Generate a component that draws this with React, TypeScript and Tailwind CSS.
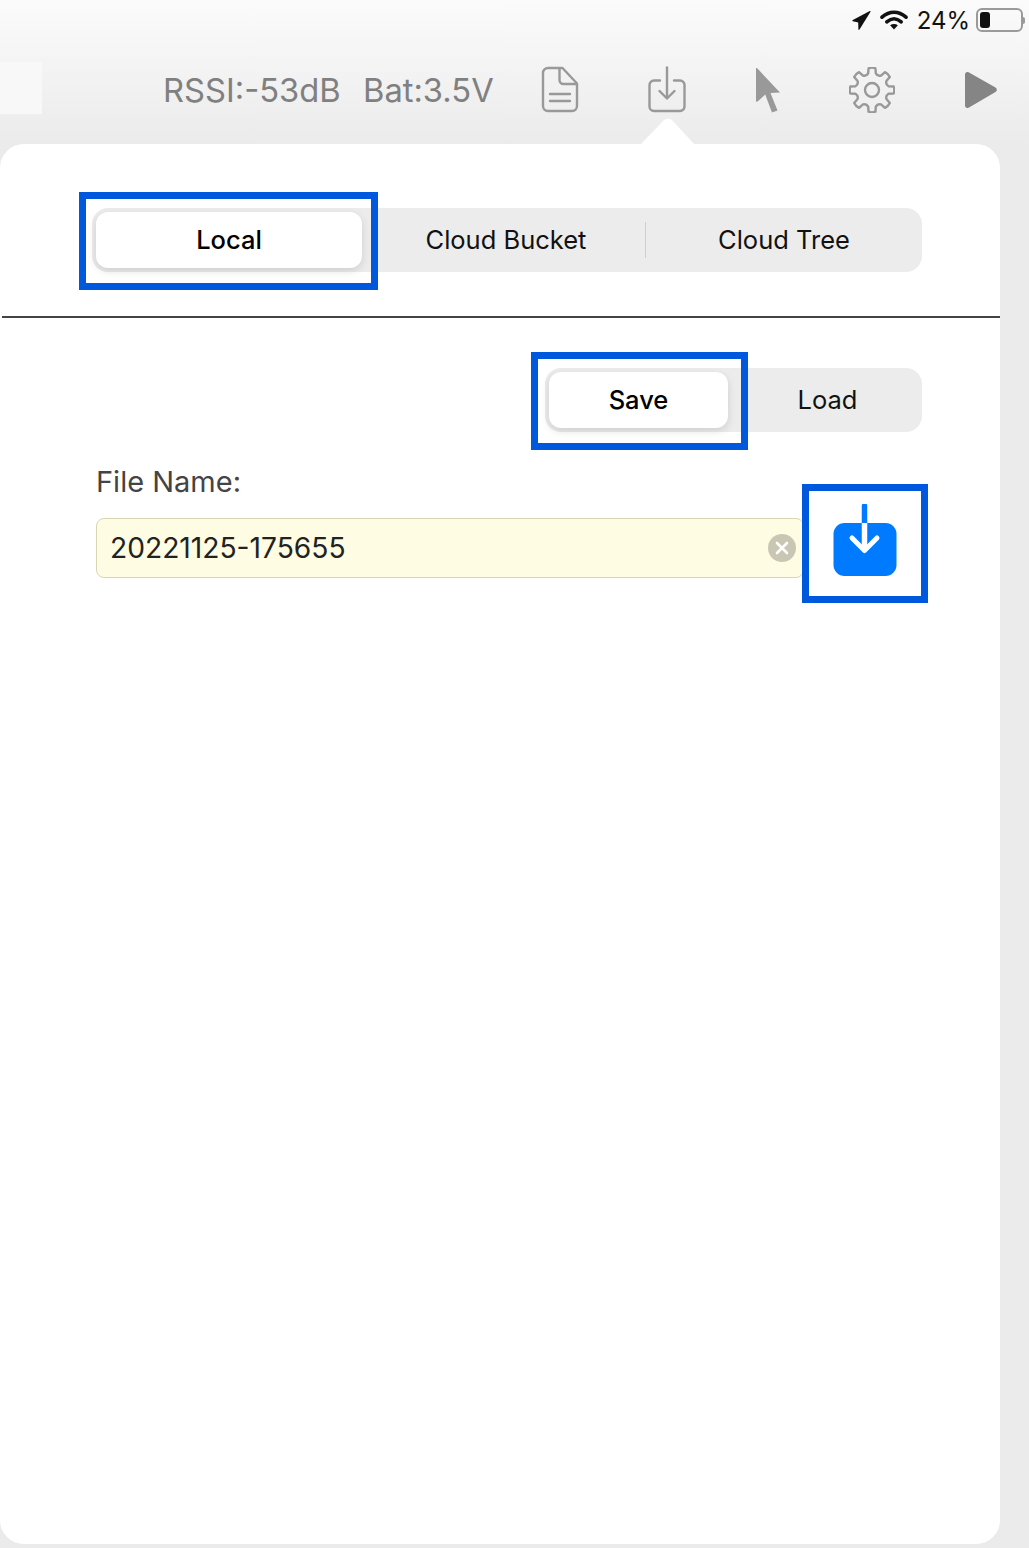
import { ReactNode } from 'react';

/* ---------- toolbar icons ---------- */

function DocIcon() {
  return (
    <svg width="38" height="48" viewBox="0 0 38 48" fill="none" stroke="#999" strokeWidth="2.4" strokeLinecap="round" strokeLinejoin="round">
      <path d="M7 2h14.500L36 17.500V40a5 5 0 0 1-5 5H7a5 5 0 0 1-5-5V7a5 5 0 0 1 5-5z" />
      <path d="M18.500 2.500V14a4 4 0 0 0 4 4h13" />
      <path d="M9 28h20M9 35h20" />
    </svg>
  );
}

function SaveIcon() {
  return (
    <svg width="38" height="48" viewBox="0 0 38 48" fill="none" stroke="#999" strokeWidth="2.4" strokeLinecap="round" strokeLinejoin="round">
      <path d="M12 14.500H6a4.500 4.500 0 0 0-4.500 4.500v21.500A4.500 4.500 0 0 0 6 45h26a4.500 4.500 0 0 0 4.500-4.500V19a4.500 4.500 0 0 0-4.500-4.500h-6" />
      <path d="M19 1.500V32" />
      <path d="M11.500 25l7.500 7.500 7.500-7.500" />
    </svg>
  );
}

function CursorIcon() {
  return (
    <svg width="26" height="46" viewBox="0 0 26 46" fill="#999">
      <path d="M1 1.500a.6.6 0 0 1 1-.4L25 25.500l-9.500.6 7 17.500-5.500 2-6.800-18L2.600 34.500c-.7.500-1.600 0-1.600-.8z" />
    </svg>
  );
}

function GearIcon() {
  // eight teeth around the ring, built from one repeated tooth
  const teeth = [0, 45, 90, 135, 180, 225, 270, 315];
  const r = 17;
  const outer = 22;
  let d = '';
  teeth.forEach((deg, i) => {
    const at = (a: number, rad: number) => {
      const t = ((deg + a - 90) * Math.PI) / 180;
      return `${(23 + rad * Math.cos(t)).toFixed(2)} ${(23 + rad * Math.sin(t)).toFixed(2)}`;
    };
    d += `${i === 0 ? 'M' : 'L'}${at(-13, r)} L${at(-9, outer)} Q${at(0, outer + 1)} ${at(9, outer)} L${at(13, r)} Q${at(22.5, r - 2.5)} ${at(32, r)} `;
  });
  return (
    <svg width="46" height="46" viewBox="0 0 46 46" fill="none" stroke="#999" strokeWidth="2.4" strokeLinejoin="round">
      <path d={`${d}Z`} />
      <circle cx="23" cy="23" r="7" />
    </svg>
  );
}

function PlayIcon() {
  return (
    <svg width="34" height="38" viewBox="0 0 34 38" fill="#858585">
      <path d="M1 3.500C1 1.500 2.800.4 4.600 1.300L31.500 16.500c1.800 1 1.800 3.500 0 4.500L4.600 36.700C2.800 37.600 1 36.500 1 34.500z" />
    </svg>
  );
}

/* ---------- status bar ---------- */

function StatusBar() {
  return (
    <div className="h-10 flex items-start justify-end pr-[4px] pt-[8px] text-[#111]">
      <svg width="19" height="19" viewBox="0 0 19 19" className="mt-[3px] mr-[9px]" fill="#111">
        <path d="M18.500.8 7.500 18.600c-.4.600-1.100.4-1.100-.3L6.200 11.500.9 10.300C.2 10.100.2 9.400.8 9.100L17.800.1c.5-.2 1 .2.700.7z" />
      </svg>
      <svg width="28" height="20" viewBox="0 0 28 20" className="mt-[2px] mr-[9px]" fill="none" stroke="#111" strokeLinecap="round">
        <path d="M2 7.200C9.500.6 18.500.6 26 7.200" strokeWidth="3.6" />
        <path d="M6.800 11.800c4.600-3.900 9.800-3.900 14.400 0" strokeWidth="3.6" />
        <path d="M14 19.500l-3.900-4.300c2.400-1.600 5.400-1.600 7.800 0z" fill="#111" stroke="none" />
      </svg>
      <span className="text-[24px] leading-[26px] mr-[6px]">24%</span>
      <div className="flex items-center">
        <div className="w-[47px] h-[24px] rounded-[6px] border-2 border-[#9a9a9a] p-[2px]">
          <div className="w-[10px] h-full rounded-[3px] bg-[#111]" />
        </div>
        <div className="w-[2px] h-[7px] rounded-r-full bg-[#9a9a9a]" />
      </div>
    </div>
  );
}

/* ---------- toolbar ---------- */

function Toolbar() {
  return (
    <div className="h-[104px] flex items-start">
      <div className="w-[42px] h-[52px] mt-[22px] bg-[#f8f8f8]" />
      <div className="flex items-center h-[46px] mt-[27px] ml-[121px] text-[32.7px] text-[#808080]">
        <span className="w-[200px] pt-[2px]">RSSI:-53dB</span>
        <span className="w-[178px] pt-[2px]">Bat:3.5V</span>
        <span className="w-[107px]"><DocIcon /></span>
        <span className="w-[107px]"><SaveIcon /></span>
        <span className="w-[94px]"><CursorIcon /></span>
        <span className="w-[115px]"><GearIcon /></span>
        <span><PlayIcon /></span>
      </div>
    </div>
  );
}

/* ---------- segmented control ---------- */

function Segment({ label, active, width }: { label: string; active?: boolean; width: string }) {
  return (
    <div
      className={
        active
          ? `${width} h-[56px] flex items-center justify-center rounded-[12px] bg-white font-medium text-black shadow-[0_3px_8px_rgba(0,0,0,0.13)]`
          : `${width} h-[56px] flex items-center justify-center text-[#111]`
      }
    >
      {label}
    </div>
  );
}

function Segmented({ children, className }: { children: ReactNode; className: string }) {
  return <div className={`${className} h-[64px] p-[4px] flex items-center rounded-[16px] bg-[#ececec] text-[25.5px]`}>{children}</div>;
}

/* ---------- annotation rectangle drawn over the screenshot ---------- */

function Mark({ className }: { className: string }) {
  return <div className={`absolute border-[7px] border-[#0058dc] ${className}`} />;
}

export default function App() {
  return (
    <div className="relative w-[1029px] h-[1548px] overflow-hidden flex flex-col bg-[#ececec] bg-[linear-gradient(to_bottom,#fbfbfb_0px,#ebebeb_144px)] font-['Inter','Liberation_Sans',sans-serif]">
      <StatusBar />
      <Toolbar />

      {/* ---- popover ---- */}
      <div className="relative w-[1000px] h-[1400px] bg-white rounded-[24px]">
        <svg width="60" height="28" viewBox="0 0 60 28" className="absolute left-[638px] top-[-26px]" fill="#fff">
          <path d="M1 28L26 2Q30-1 34 2L58 28z" />
        </svg>

        <div className="h-[174px] ml-[2px] pt-[64px] border-b-[2px] border-[#444]">
          <Segmented className="ml-[90px] w-[830px]">
            <Segment label="Local" active width="w-[266px]" />
            <Segment label="Cloud Bucket" width="w-[283px] pl-[5px]" />
            <div className="w-[1px] h-[36px] bg-[#cfcfcf]" />
            <Segment label="Cloud Tree" width="w-[272px] pl-[4px]" />
          </Segmented>
        </div>

        <div className="flex justify-end mt-[50px] mr-[78px]">
          <Segmented className="w-[377px]">
            <Segment label="Save" active width="w-[179px]" />
            <Segment label="Load" width="w-[190px] pl-[9px]" />
          </Segmented>
        </div>

        <div className="ml-[96px] mt-[32px] text-[29px] leading-[36px] text-[#444]">File Name:</div>

        <div className="flex items-center mt-[17px] ml-[96px]">
          <div className="w-[708px] h-[60px] flex items-center justify-between pl-[13px] pr-[7px] rounded-[8px] border border-[#d8d5b4] bg-[#fefce3] text-[28.2px] text-[#222]">
            <span className="pt-[2px]">20221125-175655</span>
            <svg width="28" height="28" viewBox="0 0 28 28">
              <circle cx="14" cy="14" r="14" fill="#c9c7b4" />
              <path d="M9 9l10 10M19 9L9 19" stroke="#fff" strokeWidth="2.6" strokeLinecap="round" />
            </svg>
          </div>
          <svg width="64" height="74" viewBox="0 0 64 74" className="ml-[29px] mt-[-13px]">
            <rect x="0.5" y="19" width="63" height="53" rx="11" fill="#007aff" />
            <path d="M31.500 2v19" stroke="#007aff" strokeWidth="5.500" strokeLinecap="round" />
            <path d="M31.500 19v26" stroke="#fff" strokeWidth="5.500" />
            <path d="M19 34l12.500 12.500L44 34" fill="none" stroke="#fff" strokeWidth="5" strokeLinecap="round" strokeLinejoin="round" />
          </svg>
        </div>
      </div>

      {/* ---- blue annotation boxes ---- */}
      <Mark className="left-[79px] top-[192px] w-[299px] h-[98px]" />
      <Mark className="left-[531px] top-[352px] w-[217px] h-[98px]" />
      <Mark className="left-[802px] top-[484px] w-[126px] h-[119px]" />
    </div>
  );
}
